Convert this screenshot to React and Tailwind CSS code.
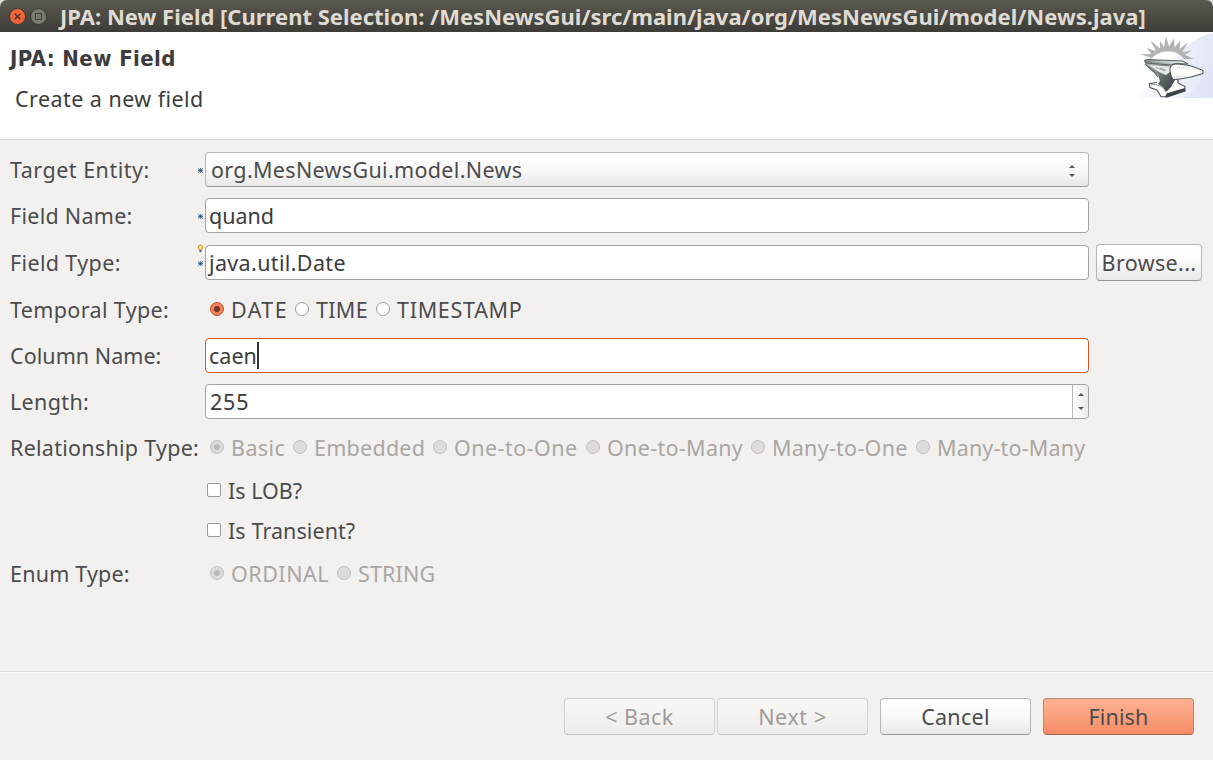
import React from "react";

const inputBase =
  "flex h-[35px] w-[884px] items-center rounded-[4px] border bg-white";

function Row({ label, className, textClass = "", children }) {
  return (
    <div className={`flex items-center ${className}`}>
      <div className={`w-[187px] shrink-0 whitespace-nowrap pl-[10px] ${textClass}`}>{label}</div>
      {children}
    </div>
  );
}

function Star() {
  return (
    <svg className="block" width="7" height="7" viewBox="0 0 7 7" stroke="#1f4a78" strokeWidth="1">
      <path d="M3.5 1v5M1 3.500h5" strokeWidth=".7" />
      <path d="M1.200 1.500l4.600 4M5.800 1.500l-4.600 4" strokeWidth=".9" />
    </svg>
  );
}

function Bulb() {
  return (
    <svg className="block" width="7" height="9" viewBox="0 0 7 9">
      <path d="M3.5 1a2.2 2.2 0 0 1 1.5 3.7l-.6 1.2H2.6L2 4.700A2.2 2.2 0 0 1 3.500 1z" fill="#fff3c4" stroke="#e09a1c" strokeWidth="1.200" />
      <path d="M2.500 6h2v1.500l-1 1-1-1z" fill="#50657d" />
    </svg>
  );
}

function Marks({ bulb }) {
  return (
    <div className={`relative flex h-[35px] w-[18px] shrink-0 items-center pl-[10px] ${bulb ? "mt-[2px]" : ""}`}>
      {bulb && (
        <div className="absolute left-[10px] top-[-2px]">
          <Bulb />
        </div>
      )}
      <Star />
    </div>
  );
}

function Radio({ checked, disabled }) {
  if (checked && !disabled)
    return (
      <span className="flex size-[14px] shrink-0 items-center justify-center rounded-full border border-[#c4552c] bg-[#f58059]">
        <span className="size-[6px] rounded-full bg-[#6b3a2a]" />
      </span>
    );
  if (disabled)
    return (
      <span className="flex size-[14px] shrink-0 items-center justify-center rounded-full border border-[#c2c0be] bg-[#dddcda]">
        {checked && <span className="size-[6px] rounded-full bg-[#bcbab8]" />}
      </span>
    );
  return <span className="block size-[14px] shrink-0 rounded-full border border-[#a09e9b] bg-white" />;
}

function Option({ label, width, textClass = "", checked, disabled }) {
  return (
    <div className={`flex shrink-0 items-center gap-[7px] whitespace-nowrap ${width}`}>
      <span className="mt-[-2px]">
        <Radio checked={checked} disabled={disabled} />
      </span>
      <span className={`${disabled ? "text-[#aaa6a2]" : ""} ${textClass}`}>{label}</span>
    </div>
  );
}

function Check({ label, textClass = "" }) {
  return (
    <div className="flex h-[40px] items-center gap-[7px] pl-[207px]">
      <span className="mt-[-2px] size-[14px] rounded-[2px] border border-[#9b9895] bg-white" />
      <span className={textClass}>{label}</span>
    </div>
  );
}

function Arrows({ gap }) {
  return (
    <div className={`flex flex-col ${gap}`}>
      <svg className="block" width="6" height="3" viewBox="0 0 6 3">
        <path d="M3 0l3 3H0z" fill="#5a5856" />
      </svg>
      <svg className="block" width="6" height="3" viewBox="0 0 6 3">
        <path d="M0 0h6L3 3z" fill="#5a5856" />
      </svg>
    </div>
  );
}

function Button({ className, textClass = "", children }) {
  return (
    <button className={`flex h-[37px] shrink-0 items-center justify-center whitespace-nowrap rounded-[4px] border pt-px ${className}`}>
      <span className={textClass}>{children}</span>
    </button>
  );
}

const lightButton =
  "border-[#b9b7b4] border-b-[#999794] bg-linear-to-b from-white via-[#fafafa] to-[#e9e8e7]";
const disabledButton =
  "border-[#d3d1cf] border-b-[#c3c1bf] bg-linear-to-b from-[#f8f8f7] to-[#eeedec] text-[#9f9c99]";

function Anvil() {
  return (
    <svg className="block" width="76" height="66" viewBox="0 0 76 66">
      <defs>
        <linearGradient id="sky" x1="0" y1="0" x2="1" y2="0">
          <stop offset="0" stopColor="#fbfbff" />
          <stop offset="1" stopColor="#e3e7f7" />
        </linearGradient>
        <linearGradient id="top" x1="0" y1="0" x2="1" y2="0">
          <stop offset="0" stopColor="#7d888a" />
          <stop offset="1" stopColor="#e0e4e2" />
        </linearGradient>
        <linearGradient id="body" x1="0" y1="0" x2="1" y2="1">
          <stop offset="0" stopColor="#b9bfc0" />
          <stop offset=".55" stopColor="#596163" />
          <stop offset="1" stopColor="#343b3d" />
        </linearGradient>
      </defs>
      <path d="M76 1C66 3 56 8 48 16L20 44 2 66h74z" fill="url(#sky)" />
      <path d="M48 66C60 56 68 40 76 28v38z" fill="#dde3f5" opacity=".6" />
      <path
        d="M12 27L14 25.500 3 22.500 14 22 10 16 19 19 13.500 8.500 23 16.500 23 9 27 15 29 4 32 14.500 37 6.500 37.500 15.500 43.500 8.500 42.500 17 51 10.500 45.500 20 55 18.500 48 23 57 27 47 27C42 21 37 19.500 31 19.500 24 19.500 18 22 14 27z"
        fill="#b1b4b5"
      />
      <path d="M8 32L17 40 21 45 22 49 19 51 13 51 13 55 20 57 24 64 31 64 31 62 48 57 48 54 41 51 40 48 52 46 35 46 33 33z" fill="#fbfbfa" />
      <path d="M8 31L34 33.500 34 43 37 47 42 48 39 51 33 56 29 60 26 55 21 52 23 49 21 43 16 39z" fill="url(#body)" />
      <path d="M12 33L33 34.500 33 40 29 43 22 40z" fill="#e8ebea" />
      <path d="M8 32L17 40 21 45" fill="none" stroke="#596163" strokeWidth="1.200" />
      <path d="M19 35.500L28 39M23 36L29 38" stroke="#8d9496" strokeWidth=".8" />
      <path d="M38 48L41 48 40 52 36 55 33 57z" fill="#fbfbfa" />
      <path d="M7.500 28.500L10 27.500 46 29 51 32 38 31.500 34 33 8.500 31z" fill="url(#top)" stroke="#4b5355" strokeWidth=".9" />
      <path d="M11 28.700L45 30 47 31 36 30.800z" fill="#e3e7e5" />
      <path d="M33 36C34 33 37 31.700 41 32L53 33.500 66 38.500 66 41.500 54 45 43 47 36 47.500C34 44 32.500 40 33 36z" fill="#fdfdfc" stroke="#454c4e" strokeWidth="1" />
      <path d="M40 35.500L52 36.500M37 45L49 44" stroke="#a8adad" strokeWidth=".7" strokeDasharray="1 1" />
      <path d="M41 47.500L41 51 48 54.500 48 59 30 65 24 64.500 20 58 13 55.500 12.500 51.500 20 50.500" fill="none" stroke="#4d5456" strokeWidth="1.100" />
      <path d="M30 61L48 56 48 59 31 65 28 65z" fill="#3c4345" />
      <path d="M31 59.500C35 54 42 52 47 55.500L31 61z" fill="#fbfbfa" />
      <path d="M14 52.500C20 52 26 54 29 60" fill="none" stroke="#8d9496" strokeWidth="1" />
    </svg>
  );
}

export default function App() {
  return (
    <div className="flex h-[760px] w-[1213px] flex-col overflow-hidden bg-[#f2f1f0] font-['Noto_Sans',sans-serif] text-[21.5px] leading-[30px] text-[#4c4c4c]">
      <div className="bg-[#dcdad8]">
        <div className="flex h-[32px] items-center rounded-t-[7px] bg-linear-to-b from-[#5b594f] to-[#3d3c37] pl-[9px]">
          <svg className="mt-px block shrink-0" width="40" height="18" viewBox="0 0 40 18">
            <circle cx="8.500" cy="8.500" r="8" fill="#ef6537" stroke="#393630" />
            <path d="M5.700 5.700l5.600 5.600M11.300 5.700l-5.600 5.600" stroke="#493027" strokeWidth="1.300" />
            <circle cx="29.500" cy="8.500" r="8" fill="#7b7970" stroke="#393630" />
            <rect x="26.500" y="5.500" width="6" height="6" fill="none" stroke="#403e38" />
          </svg>
          <div className="ml-[11px] whitespace-nowrap text-[22px] font-bold text-[#dfdbd2]">
            JPA: New Field [Current Selection: /MesNewsGui/src/main/java/org/MesNewsGui/model/News.java]
          </div>
        </div>
      </div>

      <div className="flex h-[108px] justify-between border-b border-[#dad8d6] bg-white text-[#3c3c3c]">
        <div>
          <div className="pl-[10px] pt-[12px] font-['DejaVu_Sans_Condensed','DejaVu_Sans',sans-serif] text-[22px] font-bold leading-[30px] tracking-[0.4px] [font-stretch:condensed]">JPA: New Field</div>
          <div className="pl-[15px] pt-[10px] tracking-[0.45px]">Create a new field</div>
        </div>
        <Anvil />
      </div>

      <div className="flex h-[532px] flex-col border-b border-[#dad8d6] pt-[7px]">
        <Row label="Target Entity:" className="h-[46px]" textClass="tracking-[0.5px]">
          <Marks />
          <div className="mt-[-2px] flex h-[35px] w-[884px] items-center justify-between rounded-[4px] border border-[#b9b7b4] border-b-[#999794] bg-linear-to-b from-white via-[#fafafa] to-[#e9e8e7] pl-[5px] pr-[13px]">
            <span className="mt-[2px] tracking-[0.33px]">org.MesNewsGui.model.News</span>
            <Arrows gap="mt-[4px] gap-[6px]" />
          </div>
        </Row>
        <Row label="Field Name:" className="h-[46px]" textClass="tracking-[0.27px]">
          <Marks />
          <div className={`${inputBase} mt-[-2px] border-[#a5a29f] pl-[3px] text-[#3c3c3c]`}>
            <span className="mt-[2px]">quand</span>
          </div>
        </Row>
        <Row label="Field Type:" className="h-[47px]" textClass="tracking-[0.36px]">
          <Marks bulb />
          <div className={`${inputBase} border-[#a5a29f] pl-[3px] tracking-[0.36px] text-[#3c3c3c]`}>java.util.Date</div>
          <Button className={`ml-[7px] w-[106px] ${lightButton}`} textClass="tracking-[0.35px]">Browse...</Button>
        </Row>
        <Row label="Temporal Type:" className="h-[47px]" textClass="tracking-[0.36px]">
          <div className="flex pl-[23px]">
            <Option label="DATE" checked width="w-[85px]" textClass="tracking-[1.4px]" />
            <Option label="TIME" width="w-[81px]" textClass="tracking-[0.3px]" />
            <Option label="TIMESTAMP" width="w-[160px]" textClass="tracking-[0.7px]" />
          </div>
        </Row>
        <Row label="Column Name:" className="h-[46px]" textClass="tracking-[0.05px]">
          <div className="w-[18px] shrink-0" />
          <div className={`${inputBase} mt-[-2px] border-[#d9552a] pl-[3px] text-[#3c3c3c]`}>
            <span className="mt-[2px]">caen</span>
            <span className="h-[27px] w-[2px] bg-[#333]" />
          </div>
        </Row>
        <Row label="Length:" className="h-[46px]" textClass="tracking-[0.35px]">
          <div className="w-[18px] shrink-0" />
          <div className={`${inputBase} mt-[-2px] justify-between border-[#a5a29f] pl-[4px] text-[#3c3c3c]`}>
            <span className="mt-[2px] tracking-[0.8px]">255</span>
            <div className="flex h-full w-[16px] items-center justify-center rounded-r-[3px] border-l border-[#b9b7b4] bg-linear-to-r from-white to-[#ebeae9]">
              <Arrows gap="gap-[11px]" />
            </div>
          </div>
        </Row>
        <Row label="Relationship Type:" className="h-[46px]" textClass="tracking-[0.27px]">
          <div className="flex pl-[23px]">
            <Option label="Basic" checked disabled width="w-[83px]" textClass="tracking-[0.4px]" />
            <Option label="Embedded" disabled width="w-[140px]" textClass="tracking-[0.25px]" />
            <Option label="One-to-One" disabled width="w-[153px]" textClass="tracking-[0.45px]" />
            <Option label="One-to-Many" disabled width="w-[165px]" textClass="tracking-[0.32px]" />
            <Option label="Many-to-One" disabled width="w-[165px]" textClass="tracking-[0.27px]" />
            <Option label="Many-to-Many" disabled width="w-[180px]" textClass="tracking-[0.17px]" />
          </div>
        </Row>
        <Check label="Is LOB?" />
        <Check label="Is Transient?" textClass="tracking-[0.08px]" />
        <Row label="Enum Type:" className="h-[46px]" textClass="tracking-[0.2px]">
          <div className="flex pl-[23px]">
            <Option label="ORDINAL" checked disabled width="w-[127px]" textClass="tracking-[0.5px]" />
            <Option label="STRING" disabled width="w-[110px]" textClass="tracking-[0.15px]" />
          </div>
        </Row>
      </div>

      <div className="flex flex-1 items-start border-t border-[#fafafa] pl-[564px] pt-[25px]">
        <Button className={`w-[151px] ${disabledButton}`} textClass="tracking-[0.5px]">&lt; Back</Button>
        <Button className={`ml-[2px] w-[151px] ${disabledButton}`} textClass="tracking-[0.6px]">Next &gt;</Button>
        <Button className={`ml-[12px] w-[151px] ${lightButton}`} textClass="tracking-[0.3px]">Cancel</Button>
        <Button className="ml-[12px] w-[151px] border-[#b98871] border-b-[#9c6a54] bg-linear-to-b from-[#ffb294] to-[#f48c64]" textClass="tracking-[0.15px]">Finish</Button>
      </div>
    </div>
  );
}
